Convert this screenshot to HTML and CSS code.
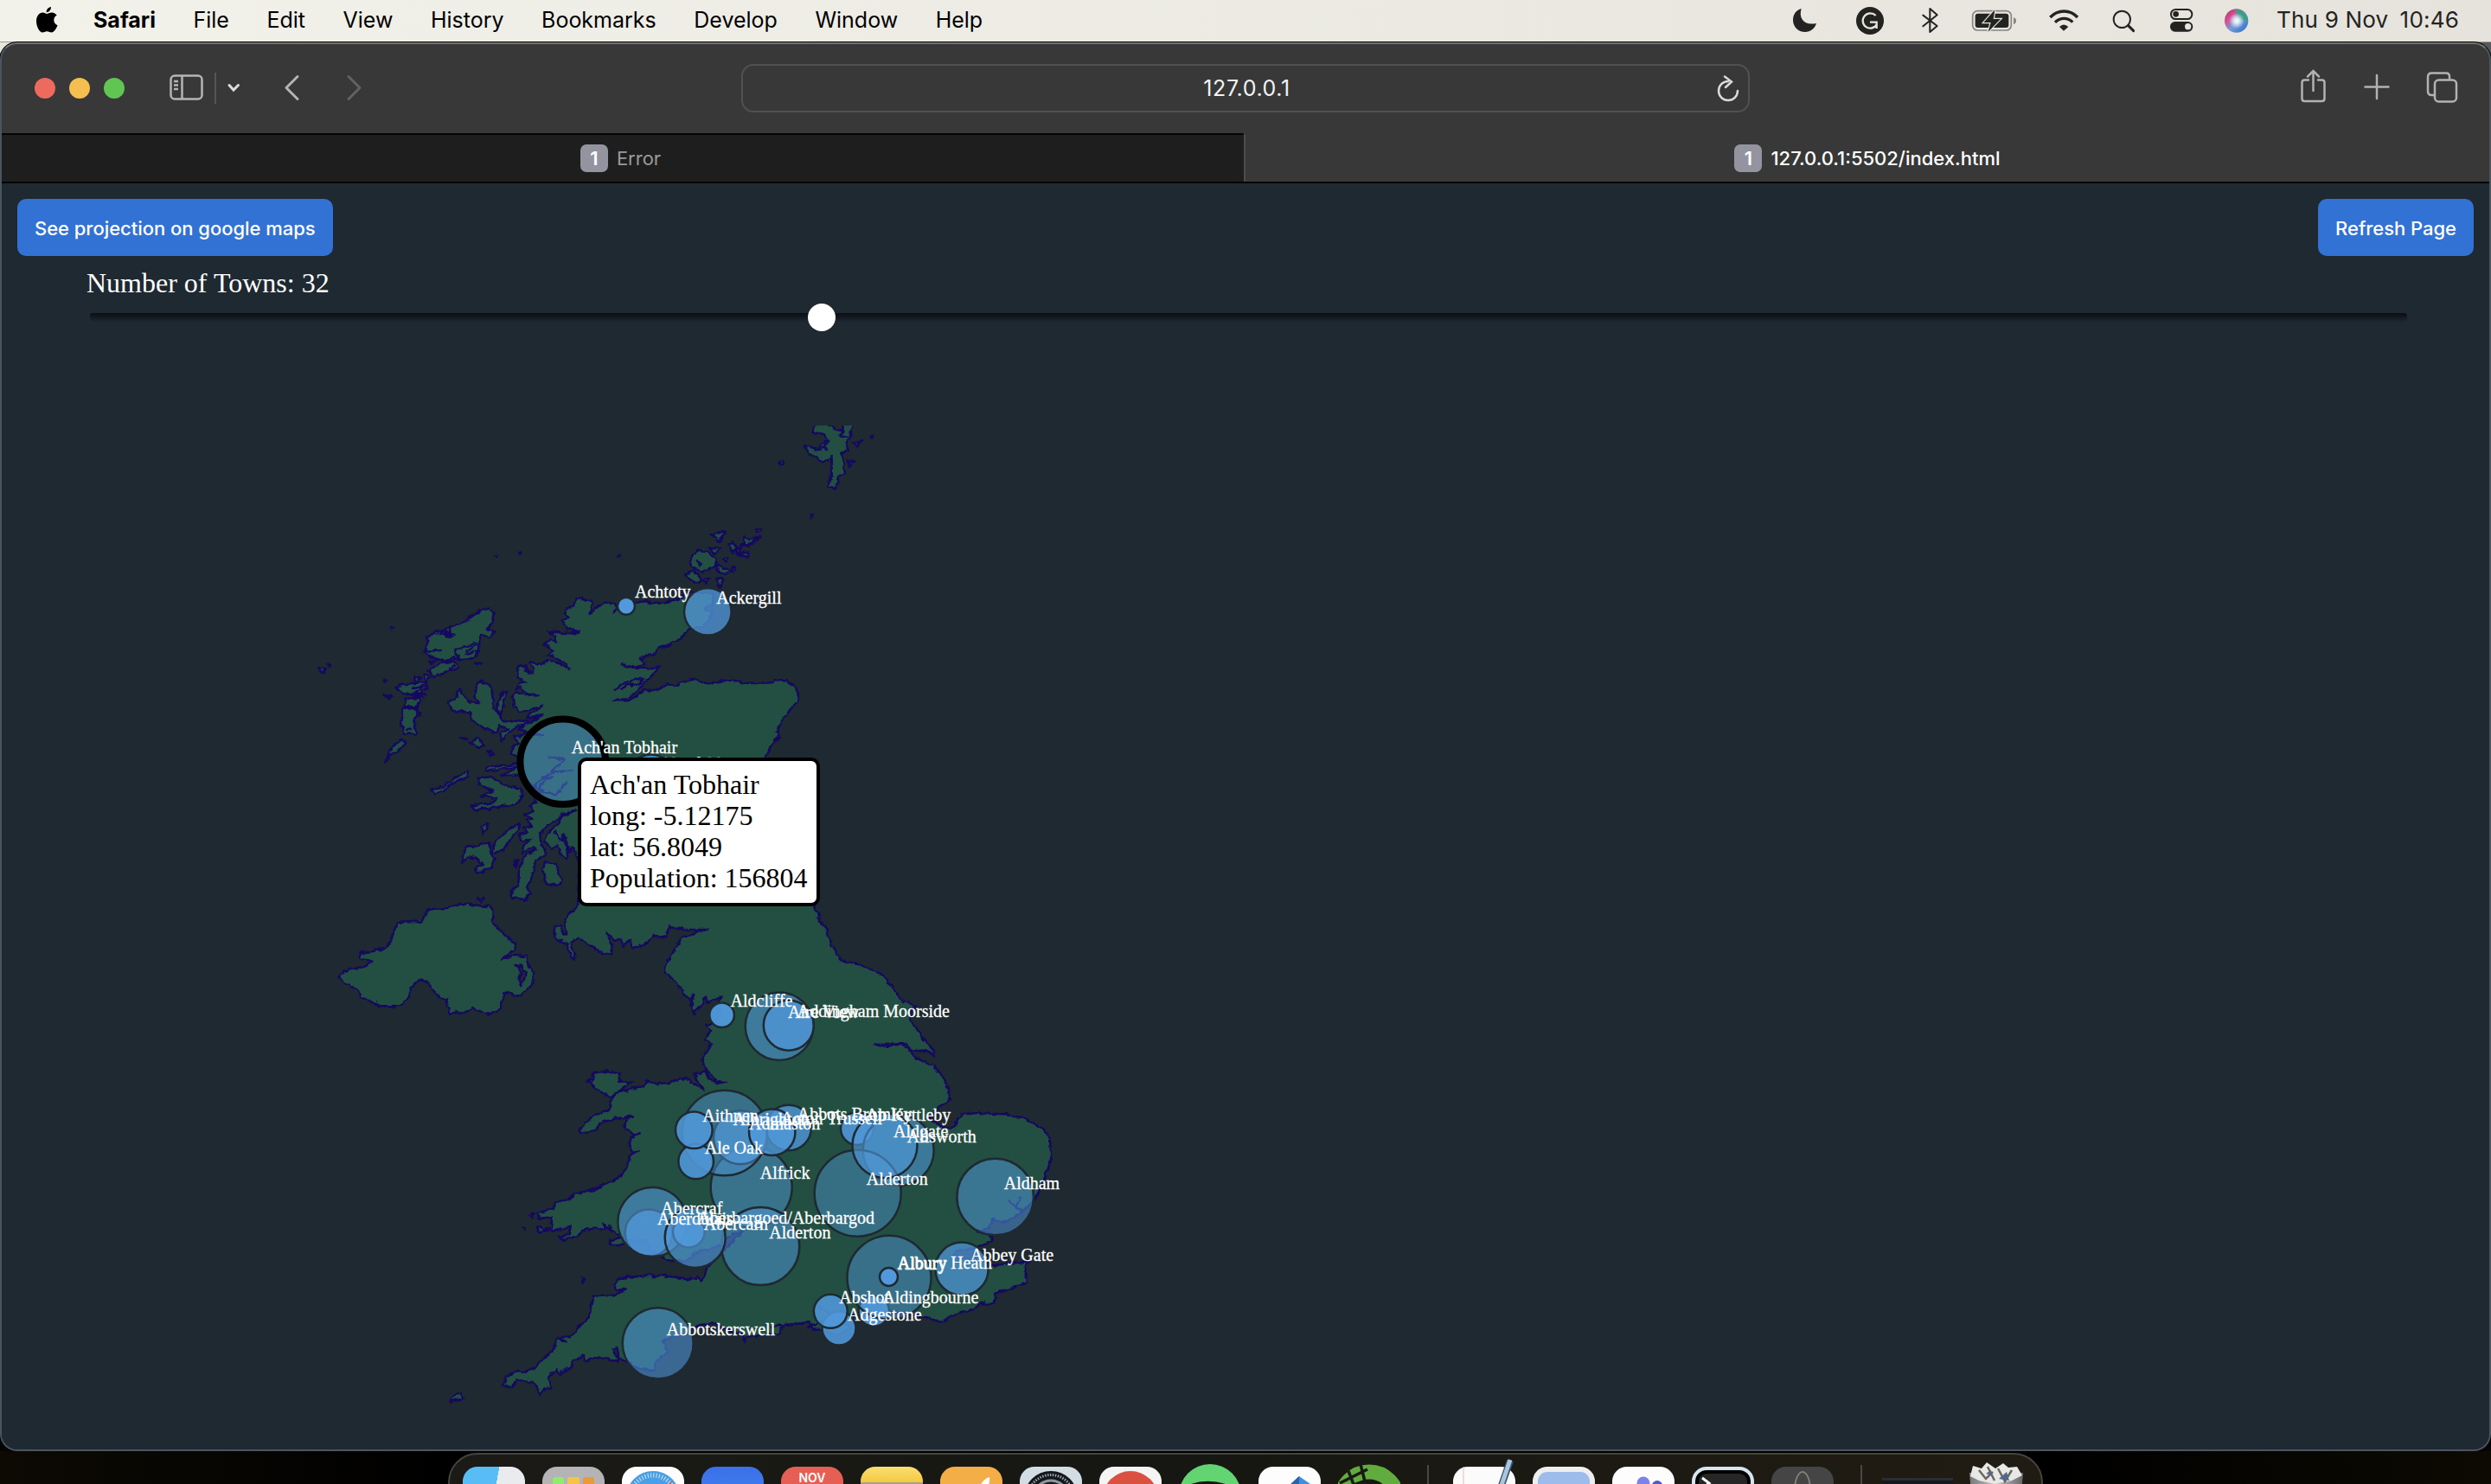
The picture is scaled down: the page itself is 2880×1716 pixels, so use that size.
FILE: index.html
```html
<!DOCTYPE html>
<html lang="en">
<head>
<meta charset="utf-8">
<title>127.0.0.1:5502/index.html</title>
<link rel="stylesheet" href="styles.css">
</head>
<body>
<div class="screen">
  <header class="menubar">
    <svg class="apple" width="26" height="32" viewBox="0 0 26 32"><path d="M18 1c.2 3.200-2.200 6.200-5.300 6.200C12.400 4.200 15 1.300 18 1zM13.200 9c1.300 0 3-1.500 5.600-1.500 2.600 0 4.700 1.400 5.900 3.100-5 3-4.200 9.700.8 11.600-1.300 3.600-4 8.300-7 8.300-2 0-2.800-1.300-5.200-1.300s-3.300 1.300-5.200 1.300C4.500 30.500 1 23.600 1 17.500c0-6 3.600-9.900 7.400-9.900 2.200 0 3.700 1.400 4.800 1.400z"/></svg>
    <nav class="menus">
      <b>Safari</b><span>File</span><span>Edit</span><span>View</span><span>History</span><span>Bookmarks</span><span>Develop</span><span>Window</span><span>Help</span>
    </nav>
    <div class="status">
      <svg width="60" height="48" viewBox="0 0 180 144"><path d="M68 30C58 62 76 90 120 81C114 100 99 111 81 111C57 111 39 93 39 69C39 50 51 34 68 30z"/></svg>
      <svg width="80" height="48" viewBox="180 0 240 144"><circle cx="306" cy="72" r="48"/><path class="paper-line" d="M326 54A26 26 0 1 0 329 86M329 99V77H306"/></svg>
      <svg width="60" height="48" viewBox="420 0 180 144"><path class="ink-line" d="M490 53L539 90L514 111V30L539 52L490 91"/></svg>
      <svg width="90" height="48" viewBox="600 0 270 144"><rect class="shell" x="662" y="38" width="134" height="67" rx="17"/><rect x="671" y="47" width="116" height="49" rx="9"/><path class="shell-fill" d="M804 60q9 3 9 12t-9 12z"/><path class="bolt" d="M739 34L700 78H725L716 110L759 66H734z"/></svg>
      <svg width="73" height="48" viewBox="870 0 219 144"><path class="wave" d="M931 60C958 32 1000 32 1026 60M948 77C966 60 992 60 1009 77"/><path d="M963 93Q978 78 994 93L978 107z"/></svg>
      <svg width="70" height="48" viewBox="1089 0 210 144"><circle class="ink-line" cx="1180" cy="67" r="29"/><path class="ink-thick" d="M1202 89L1220 107"/></svg>
      <svg width="60" height="48" viewBox="1299 0 180 144"><rect class="ink-line" x="1350" y="33" width="73" height="33" rx="16"/><circle cx="1367" cy="49" r="10"/><rect x="1347" y="75" width="79" height="35" rx="17"/><circle class="paper" cx="1409" cy="92" r="11"/></svg>
      <svg width="70" height="48" viewBox="1479 0 210 144">
        <defs><linearGradient id="siri" x1="0" y1="0" x2="1" y2="1"><stop offset="0" stop-color="#8c3a55"/><stop offset=".3" stop-color="#d94f93"/><stop offset=".55" stop-color="#6f9fd8"/><stop offset="1" stop-color="#2b62c4"/></linearGradient><radialGradient id="glow"><stop offset="0" stop-color="#fff"/><stop offset=".4" stop-color="#e9f3fb" stop-opacity=".8"/><stop offset="1" stop-color="#e9f3fb" stop-opacity="0"/></radialGradient></defs>
        <circle cx="1577" cy="72" r="41" fill="url(#siri)"/><path d="M1572 32A40 40 0 0 1 1617 74L1585 66z" fill="#3f9c86"/><circle cx="1578" cy="72" r="27" fill="url(#glow)"/></svg>
      <span class="clock">Thu 9 Nov&ensp;10:46</span>
    </div>
  </header>

  <main class="window">
    <div class="toolbar">
      <div class="lights"><i class="close"></i><i class="min"></i><i class="max"></i></div>
      <svg width="260" height="56" viewBox="180 74 260 56" class="nav-icons">
        <rect x="197.500" y="87.500" width="36" height="27" rx="4.500"/><path d="M210.500 88V114M201 94h5M201 98.500h5M201 103h5"/>
        <path class="faint" d="M249 84V120"/><path class="bright" d="M265 98.500L270 104L275.500 98.500"/>
        <path class="arrow" d="M344 88.500L331 101.500L344 114.500"/><path class="arrow dim" d="M403 88.500L416 101.500L403 114.500"/>
      </svg>
      <div class="address"><span>127.0.0.1</span>
        <svg width="28" height="34" viewBox="1984 85 28 34"><path d="M1998 94A11 11 0 1 0 2009 105M1994 88.500L2002 94.500L1995 101"/></svg>
      </div>
      <svg width="190" height="44" viewBox="2656 78 190 44" class="page-icons">
        <path d="M2669 92.500H2664.500Q2661.500 92.500 2661.500 95.500V114Q2661.500 117 2664.500 117H2684.500Q2687.500 117 2687.500 114V95.500Q2687.500 92.500 2684.500 92.500H2680M2674.500 105V83M2668 88.500L2674.500 82L2681 88.500"/>
        <path d="M2734.500 100.500H2761.500M2748 87V114"/>
        <rect x="2815" y="92.500" width="25" height="25" rx="4.500"/><path d="M2814 110H2811.500Q2807 110 2807 105.500V89Q2807 84.500 2811.500 84.500H2828Q2832 84.500 2832 88.500V91.500"/>
      </svg>
    </div>
    <div class="tabs">
      <div class="tab"><i>1</i><span>Error</span></div>
      <div class="tab active"><i>1</i><span>127.0.0.1:5502/index.html</span></div>
    </div>
    <section class="page">
      <div class="actions"><button>See projection on google maps</button><button>Refresh Page</button></div>
      <div class="slider">
        <label>Number of Towns: 32</label>
        <div class="track"><div class="thumb"></div></div>
      </div>
      <div class="map">
        <svg id="chart" width="2876" height="1284" viewBox="2 392 2876 1284">
          <defs><filter id="rough" filterUnits="userSpaceOnUse" x="300" y="492" width="960" height="1178" color-interpolation-filters="sRGB"><feTurbulence type="fractalNoise" baseFrequency=".13" numOctaves="3" seed="4"/><feDisplacementMap in="SourceGraphic" scale="6" xChannelSelector="R" yChannelSelector="G"/></filter></defs>
          <g id="land" filter="url(#rough)"></g>
          <g id="circles"></g>
          <g id="labels"></g>
        </svg>
        <div class="tooltip">Ach'an Tobhair<br>long: -5.12175<br>lat: 56.8049<br>Population: 156804</div>
      </div>
    </section>
  </main>

  <footer class="desktop">
    <div class="dock">
      <div class="app finder"></div>
      <div class="app launchpad"><i></i><i></i><i></i></div>
      <div class="app safari"><svg width="72" height="36" viewBox="0 0 72 36"><circle cx="36" cy="36" r="31" fill="#4aa0e6"/><circle cx="36" cy="36" r="26" fill="none" stroke="#cfe6f8" stroke-width="5" stroke-dasharray="1 2.300"/><path d="M60 14L44 36H38z" fill="#e2574c"/></svg></div>
      <div class="app mail"></div>
      <div class="app calendar">NOV</div>
      <div class="app notes"></div>
      <div class="app pages"><svg width="72" height="36" viewBox="0 0 72 36"><path d="M46 24Q48 15 57 12Q58 20 53 26z" fill="#fff"/></svg></div>
      <div class="app settings"><svg width="72" height="36" viewBox="0 0 72 36"><circle cx="36" cy="36" r="31" fill="#15181b"/><circle cx="36" cy="36" r="26.500" fill="none" stroke="#9aa3a9" stroke-width="3" stroke-dasharray="1.500 1.500"/><circle cx="36" cy="36" r="20" fill="none" stroke="#8d969c" stroke-width="3"/></svg></div>
      <div class="app chrome"><svg width="72" height="36" viewBox="0 0 72 36"><circle cx="36" cy="37" r="32" fill="#db5141"/></svg></div>
      <div class="app round"><svg width="72" height="36" viewBox="0 0 72 36"><circle cx="36" cy="36" r="36" fill="#62d572"/><path d="M13 26Q34 18 58 27" fill="none" stroke="#14180f" stroke-width="5"/></svg></div>
      <div class="app code"><svg width="72" height="36" viewBox="0 0 72 36"><path d="M34 23L47 11L60 20V36H34z" fill="#3f8fe0"/><path d="M34 23L47 11V36H34z" fill="#2a63ad"/></svg></div>
      <div class="app round"><svg width="72" height="36" viewBox="0 0 72 36"><circle cx="36" cy="42" r="33" fill="none" stroke="#62ac3f" stroke-width="17"/><path d="M2 22L34 6M12 8L22 34M26 0L32 24M0 30L30 20" stroke="#181a15" stroke-width="3.500"/></svg></div>
      <div class="rule"></div>
      <div class="app textedit"><svg width="72" height="50" viewBox="0 -14 72 50"><path d="M12 0V36" stroke="#f0b8b8" stroke-width="1"/><path d="M66 -7L51 36" stroke="#35566f" stroke-width="8"/><path d="M66 -8L51 36" stroke="#a9c6dc" stroke-width="5"/></svg></div>
      <div class="app preview"></div>
      <div class="app teams"><svg width="72" height="36" viewBox="0 0 72 36"><circle cx="36" cy="19" r="7.500" fill="#7b83eb"/><circle cx="52" cy="22" r="6" fill="#5059c9"/></svg></div>
      <div class="app terminal"><svg width="64" height="32" viewBox="4 4 64 32"><path d="M12 13L20 19L12 25" fill="none" stroke="#fff" stroke-width="3"/></svg></div>
      <div class="app keychain"><i></i></div>
      <div class="rule"></div>
      <div class="mini"></div>
      <svg class="trash" width="64" height="48" viewBox="0 0 64 48"><defs><linearGradient id="can"><stop offset="0" stop-color="#77797b"/><stop offset=".5" stop-color="#c2c4c5"/><stop offset="1" stop-color="#66686a"/></linearGradient></defs><path d="M1 13H63L60 48H4z" fill="url(#can)"/><path d="M2 17L5 5L15 8L21 1L31 8L40 2L46 7L56 6L62 16L50 22L30 26L12 22z" fill="#e8e8e6"/><path d="M12 10L20 20L28 12M34 8L42 23L50 10M22 6L30 22" fill="none" stroke="#6c6660" stroke-width="2.500"/><path d="M35 20l9-8 3 10zM20 14l6-4 1 6z" fill="#51678b"/></svg>
    </div>
  </footer>
</div>
<script src="map.js"></script>
</body>
</html>
```
FILE: styles.css
```css
* { box-sizing: border-box; }
body { margin: 0; background: #000; font-family: Inter, "Liberation Sans", sans-serif; }
.screen { width: 2880px; height: 1716px; overflow: hidden; display: flex; flex-direction: column; background: linear-gradient(90deg, #e8e7de 0, #e8e7de 50%, #55595d 100%) top / 100% 80px no-repeat #050504; }
.menubar { height: 49px; flex: none; display: flex; align-items: center; background: linear-gradient(90deg, #f2f1ea, #e5e3dc); border-bottom: 1px solid #9a9a96; color: #000; font-size: 25px; }
.apple { margin: -2px 0 0 41px; }
.menus { display: flex; gap: 43.5px; margin-left: 41px; margin-top: -3px; letter-spacing: 0; }
.menus b { font-weight: 700; }
.status { margin-left: auto; margin-right: 37px; display: flex; align-items: center; fill: #232321; color: #232321; }
.clock { margin-left: 9px; margin-top: -3px; white-space: nowrap; font-size: 26px; letter-spacing: .2px; }
.ink-line { fill: none; stroke: #232321; stroke-width: 6; stroke-linejoin: round; stroke-linecap: round; }
.ink-thick { fill: none; stroke: #232321; stroke-width: 9; stroke-linecap: round; }
.paper { fill: #e7e5df; }
.paper-line { fill: none; stroke: #e7e5df; stroke-width: 7; }
.shell { fill: none; stroke: #85847f; stroke-width: 5; }
.shell-fill { fill: #85847f; }
.bolt { stroke: #e7e5df; stroke-width: 7; paint-order: stroke; }
.wave { fill: none; stroke: #232321; stroke-width: 10; }

.window { height: 1629px; flex: none; display: flex; flex-direction: column; border: 2px solid #4b555d; border-top-color: #73736f; border-radius: 20px; overflow: hidden; background: #383838; box-shadow: 0 0 0 1px #000; }
.toolbar { height: 103px; flex: none; display: flex; align-items: center; padding: 0 32px 1px 38px; }
.lights { display: flex; gap: 16px; }
.lights i { width: 24px; height: 24px; border-radius: 50%; }
.close { background: #ed6a5e; }
.min { background: #f5bf4f; }
.max { background: #61c554; }
.nav-icons { margin-left: 36px; margin-top: -1px; fill: none; stroke: #b5b5b5; stroke-width: 2.500; }
.nav-icons .faint { stroke: #555; stroke-width: 2; }
.nav-icons .bright { stroke: #dcdcdc; stroke-width: 3; stroke-linecap: round; }
.nav-icons .arrow { stroke-width: 3; stroke-linecap: round; stroke-linejoin: round; }
.nav-icons .dim { stroke: #626262; }
.address { margin-left: 417px; width: 1166px; height: 56px; border: 2px solid #515151; border-radius: 14px; display: flex; align-items: center; justify-content: center; position: relative; color: #f2f2f2; font-size: 25px; letter-spacing: .6px; padding-left: 3px; }
.address svg { position: absolute; right: 9px; top: 9px; fill: none; stroke: #dadada; stroke-width: 2.500; stroke-linecap: round; }
.page-icons { margin-left: auto; margin-top: -4px; fill: none; stroke: #b2b2b2; stroke-width: 2.500; stroke-linecap: round; }
.tabs { height: 58px; flex: none; display: grid; grid-template-columns: 1436px 1fr; border-bottom: 2px solid #050505; }
.tab { display: flex; align-items: center; justify-content: center; gap: 10px; padding-right: 5px; background: #1e1e1e; border-top: 2px solid #050505; color: #9a9a9a; font-size: 22px; }
.tab.active { background: #383838; color: #fff; font-weight: 500; border-top-color: #383838; border-left: 2px solid #4c4c4c; padding-right: 0; }
.tab i { width: 32px; height: 32px; border-radius: 7px; background: #9494a0; color: #fff; font: 600 22px/32px Inter, sans-serif; text-align: center; }

.page { flex: 1; background: #1f2931; display: flex; flex-direction: column; }
.actions { display: flex; justify-content: space-between; padding: 18px 18px 0; height: 84px; flex: none; }
button { height: 66px; padding: 2px 20px 0; border: 0; border-radius: 10px; background: #3172d4; color: #fff; font: 500 22px Inter, sans-serif; letter-spacing: -.03px; }
.slider { height: 96px; flex: none; padding: 12px 93px 0 98px; font: 32px/38px "Liberation Serif", serif; color: #fff; }
.slider label { display: block; }
.track { width: 2679px; height: 10px; margin: 16px 0 0 4px; border-radius: 3px; background: linear-gradient(#0b0e13, #1d2630); display: flex; align-items: center; }
.thumb { width: 32px; height: 32px; border-radius: 50%; background: #fff; margin-left: 830px; flex: none; }
.map { flex: 1; position: relative; min-height: 0; }
.map svg { display: block; }
#land path { fill: #224f42; stroke: #14085f; stroke-width: 2.400; stroke-linejoin: round; }
#land .loch { fill: none; }
#land .water { fill: #1f2931; }
#circles circle { fill: #5199dc; stroke: #1f2931; stroke-width: 2.500; }
#circles .hovered { stroke: #000; stroke-width: 8; }
#labels text { font: 20px "Liberation Serif", serif; fill: #fff; stroke: #fff; stroke-width: .3px; }
.tooltip { position: absolute; left: 666px; top: 484px; width: 280px; height: 172px; padding: 9px 0 0 10px; border: 4px solid #000; border-radius: 10px; background: #fff; color: #000; font: 32px/36px "Liberation Serif", serif; white-space: nowrap; }

.desktop { height: 38px; flex: none; display: flex; padding: 2px 0 0 518px; background: linear-gradient(90deg, #0d0a04, #000 18%, #000 82%, #0d0a03); overflow: hidden; }
.dock { width: 1844px; height: 120px; border: 2px solid #45443d; border-radius: 34px; background: linear-gradient(90deg, #1b1a16, #161712 45%, #211c13); display: flex; gap: 20px; padding: 14px 0 0 15px; align-items: flex-start; }
.app { width: 72px; height: 72px; flex: none; border-radius: 17px; }
.app svg { display: block; }
.app.round { border-radius: 0; margin-top: -3px; }
.finder { background: linear-gradient(100deg, #58bdf5 50%, #e9ebee 50%); }
.launchpad { background: #b4b4b6; display: flex; gap: 4px; padding: 12px 12px 0; }
.launchpad i { width: 14px; height: 20px; border-radius: 3px; background: #8fec6c; }
.launchpad i + i { background: #f3c648; }
.launchpad i + i + i { background: #ea9a38; }
.safari, .code, .teams, .chrome { background: #fdfdfd; }
.chrome { background: #f4f4f4; }
.mail { background: linear-gradient(#3a6fe9, #4a93f7); }
.calendar { background: #e55f55; color: #fff; font: 600 14px/26px Inter, sans-serif; text-align: center; }
.notes { background: linear-gradient(#f9df72, #f5c93f 18px, #a8a08c 18px, #a8a08c 20px, #eee 20px); }
.pages { background: #f3ae48; }
.settings { background: #d3dde4; }
.textedit { background: #fbfbfb; }
.textedit svg { margin-top: -14px; }
.preview { background: #9dbbeb; border: 6px solid #eeeeef; }
.terminal { background: #262626; border: 4px solid #d5e6ef; box-shadow: inset 0 0 0 4px #000; }
.keychain { background: #454545; padding: 5px 26px; }
.keychain i { display: block; width: 20px; height: 44px; border: 2px solid #84807a; border-radius: 50%; }
.rule { width: 2px; height: 60px; margin: -2px 7px 0 11px; background: #494843; flex: none; }
.rule + .textedit { margin-left: 1px; }
.mini { width: 82px; height: 30px; margin: 13px 0 0 -4px; background: #15181f; border-top: 3px solid #2a2d31; flex: none; }
.trash { margin: -6px 0 0 -2px; flex: none; }
```
FILE: map.js
```javascript
// Survey sheets: origin x, origin y, units per pixel across, units per pixel down.
const SHEETS = {
  west: [500, 680, 3, 3],
  north: [360, 470, 2.24, 3],
  middle: [360, 820, 2.24, 3],
  england: [560, 1080, 2.24, 3],
  south: [500, 1360, 2.0632, 3]
};

function project(sheet, text) {
  const [ox, oy, sx, sy] = SHEETS[sheet];
  return text.trim().split(/\s+/).map(pair => {
    const [x, y] = pair.split(',').map(Number);
    return [(ox + x / sx).toFixed(1), (oy + y / sy).toFixed(1)];
  });
}

const NS = 'http://www.w3.org/2000/svg';
function add(parent, name, attrs, text) {
  const node = document.createElementNS(NS, name);
  for (const key in attrs) node.setAttribute(key, attrs[key]);
  if (text) node.textContent = text;
  parent.appendChild(node);
}

const land = document.getElementById('land');
function draw(points, closed, cls) {
  add(land, 'path', { d: 'M' + points.map(p => p.join(' ')).join('L') + (closed ? 'Z' : ''), class: cls || '' });
}

// Mainland, clockwise from the Firth of Clyde: down the east side, then back up the west.
draw([
  ...project('west', `510,960 498,920 485,900 475,915 465,870 450,855 465,900 470,940 445,925 435,895 410,903 390,880 400,850 440,815 450,790 500,770
    450,785 440,800 400,820 372,852 378,890 395,925 360,945 345,1000 330,1040 342,1060 320,1080 275,1075 275,1050 298,1035 300,980 318,930 360,905 350,900 310,918 312,895
    340,870 305,878 303,855 330,850 318,830 345,825 325,805 348,800 322,785 348,775 335,755 360,745 350,725 385,700 350,690 310,650 240,650 300,620 185,635 190,622 290,612 310,600 275,570 275,555 300,540 285,520 330,500 300,490 320,470
    380,445 325,452 350,430 380,410 300,430 282,405 278,375 290,360 320,372 362,370 325,368 305,345 290,352 300,330 322,325 295,310 295,270 322,268 325,290 350,295 352,280 335,260
    345,253 380,268 400,250 450,265 475,282 465,262 420,240 395,232 420,215 388,195 410,180 432,188 425,165 400,150 455,156 512,152 465,140 450,112 475,105 462,80 490,60
    498,35 540,42 555,52 545,90 578,60 600,45 630,55 638,65 628,90 645,60 705,50 740,45 760,52 800,50 850,40 890,15 975,22 970,60 945,75 970,85 960,115 930,135 890,145 850,185 780,210
    765,230 720,245 738,265 700,275 650,264 700,278 770,280 790,270 760,305 735,325 715,350 680,385 625,388 690,388 720,365 730,353 780,355 815,335 850,340 860,325 900,315
    960,330 1010,320 1100,330 1180,328 1190,322 1230,322 1260,345 1272,385 1245,420 1215,450 1198,490 1202,515 1170,555 1155,590`),
  ...project('middle', '1303,680 1315,730 1335,765 1345,820 1370,862'),
  ...project('england', `1430,910 1440,880 1450,850 1468,780 1465,710 1450,680 1400,640 1350,625 1240,620 1228,640 1220,670 1190,672 1150,640 1170,610 1205,575 1203,540
    1185,490 1165,460 1120,430 1085,385 1050,390 1010,385 1040,381 1090,378 1110,405 1150,405 1163,425 1165,410 1130,350 1105,300 1100,270 1120,252 1080,230 1060,190 1035,145 990,115 940,95 918,90`).reverse(),
  ...project('south', `450,0 385,48 340,60 330,80 290,90 290,110 250,130 255,145 285,145 285,180 250,185 290,190 330,175 325,205 300,210 315,222 350,205 360,185 415,180
    405,165 425,185 440,200 455,210 425,222 425,240 455,240 465,222 510,220 520,260 540,270 555,288 590,295 615,290 625,265 690,240 715,200 740,190 700,250 690,265 655,315
    650,345 640,365 635,352 605,358 580,350 545,345 510,345 440,355 435,375 440,395 460,393 437,410 385,415 378,450 375,490 350,520 335,550 295,565 290,600 265,635 240,665
    225,680 205,675 175,695 170,730 190,732 200,705 240,715 258,758 270,735 282,735 275,700 295,670 300,685 330,665 335,640 360,625 365,640 400,628 430,640 445,640 430,600 440,590
    445,630 465,645 500,670 530,675 535,640 560,610 550,570 570,560 600,545 630,520 665,508 700,530 740,548 745,575 750,555 800,550 830,548 835,520 810,520 870,512 900,505 905,518
    950,490 1000,480 1050,485 1095,470 1160,485 1215,507 1240,480 1290,462 1310,442 1340,445 1345,405 1380,390 1415,370 1415,320 1423,295 1340,310 1290,290 1240,280 1250,260
    1300,248 1335,225 1330,198 1300,190 1330,180 1335,150 1370,160 1400,130 1425,100 1445,60`).reverse(),
  ...project('england', `575,318 587,335 572,370 588,380 562,435 575,470 600,510 625,513 600,519 580,500 572,475 545,488 568,542 520,500 480,515 445,520 418,508 420,520
    375,540 345,550 330,575 320,610 270,640 245,680 250,692 290,680 300,655 340,640 385,632 365,650 365,670 385,695 400,693 380,705 375,740 385,760 400,755 377,770 370,810 350,840 300,880 265,895`).reverse(),
  ...project('middle', `690,680 665,715 655,745 662,775 652,780 645,755 632,752 628,775 635,795 665,820 672,860 685,868 672,810 690,795 720,815 750,845 778,852 778,820 765,775
    785,800 800,798 805,822 825,800 830,825 860,820 885,790 920,790 925,755 960,765 1025,765 1000,772 960,790 945,830 925,865 915,910 945,950 955,970 980,1010 990,990
    985,1030 990,1055 1015,1020 1020,995 1028,1020 1065,995 1050,1030 1065,1060 1040,1090 1022,1095`).reverse()
], true);

const ISLES = {
  middle: [
    '70,925 100,900 140,895 158,875 125,865 125,845 160,840 190,830 207,800 222,740 285,738 302,695 350,690 390,675 460,685 472,700 470,735 483,760 510,795 530,815 525,835 492,870 520,855 558,858 565,895 577,915 570,960 540,995 500,985 490,1040 460,1062 415,1035 400,1050 355,1055 348,1010 320,990 310,960 283,938 255,970 255,1000 230,1030 180,1030 130,1000 120,975 90,955',
    '605,530 635,535 640,570 652,590 640,612 610,605 598,560',
    '400,480 430,475 460,460 462,490 475,520 465,550 430,568 425,550 445,540 425,515 405,515 390,538 395,505',
    '475,460 500,430 540,395 530,430 510,460 495,490 470,500',
    '430,240 470,235 500,265 540,275 548,300 530,330 480,340 430,350 410,335 470,325 480,310 440,300 470,285 450,270 435,265',
    '310,275 340,270 370,240 405,215 405,235 360,262 345,282 320,295', '428,658 448,656 442,668', '440,405 458,395 445,435',
    '235,105 245,120 225,145 205,160 190,185 210,130', '526,525 532,528 528,548'
  ],
  west: [
    '130,535 160,520 180,545 160,558', '190,565 210,570 200,580', '95,520 125,522 110,528', '285,960 297,945 290,970',
    '52,400 85,380 90,350 130,395 160,400 145,375 150,335 170,320 205,345 212,420 250,460 300,460 345,465 290,480 240,528 235,505 265,490 230,475 225,500 180,490 130,450 130,430 100,430 70,425',
    '230,395 245,360 255,360 240,440 222,420'
  ],
  north: [
    '458,697 472,715 468,750 455,775 475,780 465,798 440,790 435,820 435,845 415,875 385,880 368,870 350,885 310,870 290,850 300,840 298,800 325,782 362,765 400,745 430,715',
    '325,895 368,882 380,905 345,922 320,938 303,920', '220,970 260,960 295,958 302,975 285,990 290,1012 255,1000 235,995', '242,1014 282,1010 275,1042 242,1042',
    '238,1046 278,1043 265,1085 272,1137 238,1135 232,1090', '305,885 322,882 312,893', '268,935 282,942 272,957', '290,930 308,938 295,957',
    '985,520 1000,500 1025,505 1045,525 1052,552 1010,572 985,558 981,545', '968,580 990,568 1012,602 990,614', '1048,548 1087,570 1070,582 1053,572', '1028,490 1058,490 1045,512',
    '1038,445 1070,430 1072,445 1055,467', '1080,480 1092,468 1102,490 1090,507', '1100,500 1120,475 1118,452 1135,462 1162,455 1140,477 1118,482 1105,512', '1108,515 1130,503 1130,522', '1048,595 1067,600 1058,632',
    '1150,423 1164,428 1155,440', '1085,558 1100,560 1092,577', '1065,530 1080,526 1075,542', '1012,600 1032,598 1022,614',
    '1310,55 1340,58 1358,80 1376,85 1376,55 1408,58 1397,85 1395,110 1385,125 1392,150 1372,162 1378,200 1382,235 1364,242 1358,284 1340,278 1348,235 1346,180 1328,190 1288,167 1278,135 1318,150 1322,125 1338,118 1325,95 1298,90',
    '1290,375 1301,373 1294,391', '1210,195 1218,188 1222,200 1215,207', '1388,188 1406,188 1395,207', '1402,130 1427,118 1412,139',
    '1448,105 1456,105 1452,110', '537,507 544,507 540,512', '478,515 483,515 480,519', '793,518 798,518 795,522', '206,767 213,770 209,774', '426,887 441,887 435,893',
    '18,908 38,910 30,924', '43,896 49,896 46,902', '185,952 195,948 190,957', '188,1002 210,1004 200,1012'
  ],
  england: ['265,512 280,505 282,485 320,475 348,485 350,515 382,512 355,540 325,568 300,545 280,520'],
  south: ['895,525 920,512 985,510 1000,525 965,552 930,535', '42,787 50,762 70,752 75,770 58,777', '354,353 361,353 358,372', '217,181 222,181 220,186', '230,135 243,130 238,144', '246,180 262,178 270,190 255,192']
};
for (const sheet in ISLES) ISLES[sheet].forEach(isle => draw(project(sheet, isle), true));

draw(project('middle', '530,888 545,892 555,915 550,945 542,955 537,930 545,915'), true, 'water');
[['west', '365,695 410,640 458,595 402,585'], ['west', '380,710 430,715 465,675'], ['west', '410,640 490,630'], ['west', '340,508 390,508'], ['west', '350,690 380,660 420,655'],
 ['west', '630,355 660,330 730,312 715,335 680,335 650,350'], ['west', '425,845 440,870 460,875'],
 ['north', '330,790 345,772 350,800 358,770 362,800 340,785 372,792'], ['north', '295,848 340,846'], ['north', '432,820 400,832 375,838 370,855 385,878'], ['north', '430,828 400,850'], ['north', '425,850 400,858'],
 ['north', '260,975 300,968 262,995 295,1000 265,1005'], ['north', '278,1020 268,1045 282,1070 265,1078'], ['north', '245,1125 262,1118'],
 ['north', '370,898 355,912'], ['north', '1000,535 1008,545 1003,552'], ['north', '1335,125 1325,140 1332,150'], ['north', '1380,85 1370,100 1392,105'], ['north', '1350,165 1348,200 1345,260'],
 ['south', '1375,85 1390,110 1405,70'], ['south', '1390,110 1410,120'], ['south', '925,450 940,475 955,480'], ['south', '300,560 320,572'], ['england', '325,1005 330,1040']
].forEach(([sheet, line]) => draw(project(sheet, line), false, 'loch'));

// name, circle centre, radius: the order is the painting order.
const TOWNS = [
  ['Abbotskerswell', 760.7, 1553.3, 41], ['Achtoty', 724, 700.7, 10], ['Ackergill', 818.3, 707.3, 27.3], ['Aberfeldy', 752.7, 899.5, 27],
  ["Ach'an Tobhair", 650.7, 880.7, 49.3], ['Aldcliffe', 834.6, 1173.7, 14.3], ['Aire View', 901, 1186.7, 39.3], ['Addingham Moorside', 911.8, 1185.7, 29],
  ['Abbots Bromley', 911.7, 1304, 26.3], ['Alfrick', 868.7, 1372.7, 47], ['Admaston', 856, 1315.3, 31], ['Albrighton', 837.7, 1310, 49.3],
  ['Ale Oak', 804.7, 1343, 20.3], ['Aithnen', 802.3, 1306.7, 21.3], ['Acton Trussell', 892.7, 1309.3, 26.7],
  ['Ab Kettleby', 991, 1305, 19], ['Ailsworth', 1038.7, 1330, 41], ['Alderton', 991.7, 1379.7, 50], ['Aldgate', 1023, 1324.5, 37.5],
  ['Aldham', 1150.7, 1384, 44.3], ['Aberdulais', 750, 1425.7, 27.3], ['Abercraf', 754.3, 1413, 40], ['Aberbargoed/Aberbargod', 796.3, 1424.3, 18.3],
  ['Alderton', 879.3, 1441, 45], ['Abercarn', 803.7, 1431, 35], ['Aldingbourne', 1010.3, 1516, 17.7], ['Albury', 1028, 1477.3, 48.5],
  ['Albury Heath', 1027.5, 1476.5, 10.5], ['Abbey Gate', 1112, 1467.3, 30.7], ['Adgestone', 970, 1536, 19.5], ['Abshot', 960.3, 1516.3, 19.5]
];
const circles = document.getElementById('circles');
const labels = document.getElementById('labels');
for (const [name, x, y, r] of TOWNS) {
  const fade = Math.min(1, 1.16 - r * 0.0145).toFixed(2);
  add(circles, 'circle', { cx: x, cy: y, r: r, 'fill-opacity': fade, class: name === "Ach'an Tobhair" ? 'hovered' : '' });
  add(labels, 'text', { x: x + 10, y: y - 9.3 }, name);
}
```
